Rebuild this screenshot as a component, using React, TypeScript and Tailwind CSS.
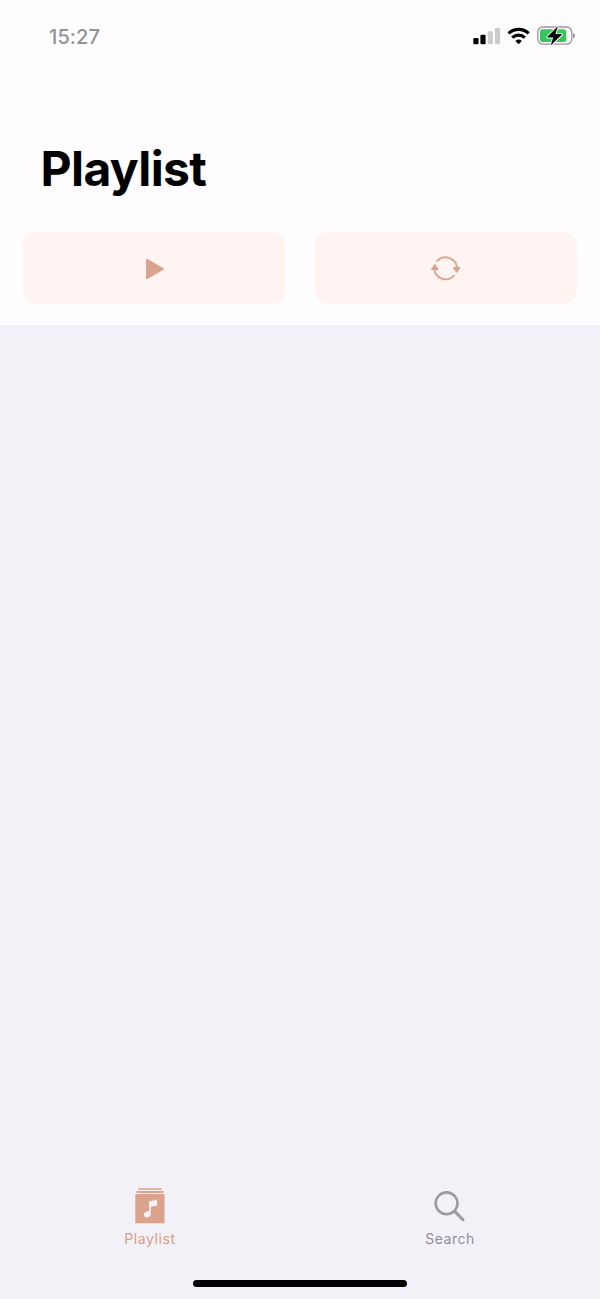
import type { ReactNode } from "react";

function SignalIcon() {
  return (
    <svg width="28" height="18" viewBox="0 0 28 18" aria-hidden="true">
      <rect x="0.3" y="11" width="5.2" height="6.3" rx="1.2" fill="#000" />
      <rect x="7.4" y="7.7" width="5.2" height="9.6" rx="1.2" fill="#000" />
      <rect x="14.7" y="4.2" width="5.2" height="13.1" rx="1.2" fill="#cdcbce" />
      <rect x="21.9" y="0.8" width="5.2" height="16.5" rx="1.2" fill="#cdcbce" />
    </svg>
  );
}

function WifiIcon() {
  return (
    <svg width="24" height="18" viewBox="0 0 24 18" fill="none" stroke="#000" strokeWidth="3.2" aria-hidden="true">
      <path d="M1.5 6.4a14.9 14.9 0 0 1 20.2 0" />
      <path d="M5.3 10.7a9.2 9.2 0 0 1 12.6 0" />
      <path d="M11.6 17.3l-3.2-3.3a4.7 4.7 0 0 1 6.4 0z" fill="#000" stroke="none" />
    </svg>
  );
}

function BatteryIcon() {
  return (
    <svg width="39" height="20" viewBox="0 0 39 20" aria-hidden="true">
      <rect x="0.8" y="1" width="34" height="17.2" rx="5" fill="#fefcff" stroke="#98969a" strokeWidth="1.3" />
      <rect x="3" y="3.2" width="26.3" height="12.8" rx="2.8" fill="#35c759" />
      <path d="M36 7c2.6.7 2.6 4.6 0 5.3z" fill="#98969a" />
      <path d="M20.2 1.3L10.6 11.1h6.1l-2.3 7.4L24.6 8.3h-6.7z" fill="#000" stroke="#fefcff" strokeWidth="2.6" strokeLinejoin="round" />
      <path d="M20.2 1.3L10.6 11.1h6.1l-2.3 7.4L24.6 8.3h-6.7z" fill="#000" stroke="#000" strokeWidth="0.8" strokeLinejoin="round" />
    </svg>
  );
}

function PlayIcon() {
  return (
    <svg className="ml-[2px]" width="20" height="22" viewBox="0 0 20 22" aria-hidden="true">
      <path d="M2 1.7v18.6L18 11z" fill="#dba28d" stroke="#dba28d" strokeWidth="1.8" strokeLinejoin="round" />
    </svg>
  );
}

function RepeatIcon() {
  return (
    <svg width="30" height="26" viewBox="0 0 30 26" fill="none" stroke="#dba28d" strokeWidth="1.9" strokeLinecap="round" aria-hidden="true">
      <path d="M6.1 5.1A11.5 11.5 0 0 1 26 12.6" />
      <path d="M23 19.7A11.5 11.5 0 0 1 3.2 12.6" />
      <path d="M22.7 11.6h5.9l-2.9 4.4z" fill="#dba28d" strokeWidth="1.4" strokeLinejoin="round" />
      <path d="M.8 13.2h5.9l-2.9-4.4z" fill="#dba28d" strokeWidth="1.4" strokeLinejoin="round" />
    </svg>
  );
}

function LibraryIcon() {
  return (
    <svg width="30" height="36" viewBox="0 0 30 36" aria-hidden="true">
      <path d="M3.3.2h23.4v1.5H3.3zM1.6 3.1h26.8v1.8H1.6z" fill="#dba28d" />
      <rect x="0.3" y="6" width="29.2" height="29.3" rx="0.5" fill="#dba28d" />
      <path d="M14.1 13.4l8-1.9v5.9l-6.3 1.4v6.8c0 2.6-1.5 3.8-3.7 3.8-2 0-3.3-1.1-3.3-2.7 0-2.1 2-3.3 5.3-3.5z" fill="#f4f2f8" />
    </svg>
  );
}

function SearchIcon() {
  return (
    <svg width="32" height="32" viewBox="0 0 32 32" fill="none" stroke="#9d9ba0" strokeWidth="2.6" strokeLinecap="round" aria-hidden="true">
      <circle cx="12.6" cy="12.3" r="10.9" />
      <path d="M20.7 20.4l8.2 8.2" strokeWidth="3" />
    </svg>
  );
}

function ActionButton({ label, children }: { label: string; children: ReactNode }) {
  return (
    <button aria-label={label} className="flex h-[72px] items-center justify-center rounded-[14px] bg-[#fff4f1] pt-px">
      {children}
    </button>
  );
}

export default function App() {
  return (
    <div className="flex h-[1299px] w-[600px] flex-col bg-[#f2f1f7] font-['Inter',sans-serif]">
      <header className="flex h-[325px] flex-col bg-[#fefcff]">
        <div className="flex h-[72px] items-center justify-between pr-[24px] pl-[49px]">
          <span className="pt-px text-[20px] leading-6 font-medium tracking-[0.1px] text-[#949296]">15:27</span>
          <div className="flex items-center gap-[6px]">
            <SignalIcon />
            <WifiIcon />
            <BatteryIcon />
          </div>
        </div>
        <h1 className="mt-[68px] pl-[40.5px] text-[48px] leading-[58px] font-bold tracking-[-0.6px] text-black">Playlist</h1>
        <div className="mt-[34px] grid grid-cols-2 gap-[29.2px] px-[23.4px]">
          <ActionButton label="Play">
            <PlayIcon />
          </ActionButton>
          <ActionButton label="Repeat">
            <RepeatIcon />
          </ActionButton>
        </div>
      </header>
      <main className="flex-1" />
      <nav className="grid h-[111px] grid-cols-2">
        <a className="flex flex-col items-center text-[#d99c85]">
          <LibraryIcon />
          <span className="mt-[5px] text-[14px] leading-5 tracking-[0.6px]">Playlist</span>
        </a>
        <a className="flex flex-col items-center pt-[3px] text-[#908e93]">
          <SearchIcon />
          <span className="mt-[6px] text-[14px] leading-5 tracking-[0.5px]">Search</span>
        </a>
      </nav>
      <div className="-mt-[19px] flex h-[19px] justify-center">
        <div className="h-[7px] w-[214px] rounded-full bg-black" />
      </div>
    </div>
  );
}
